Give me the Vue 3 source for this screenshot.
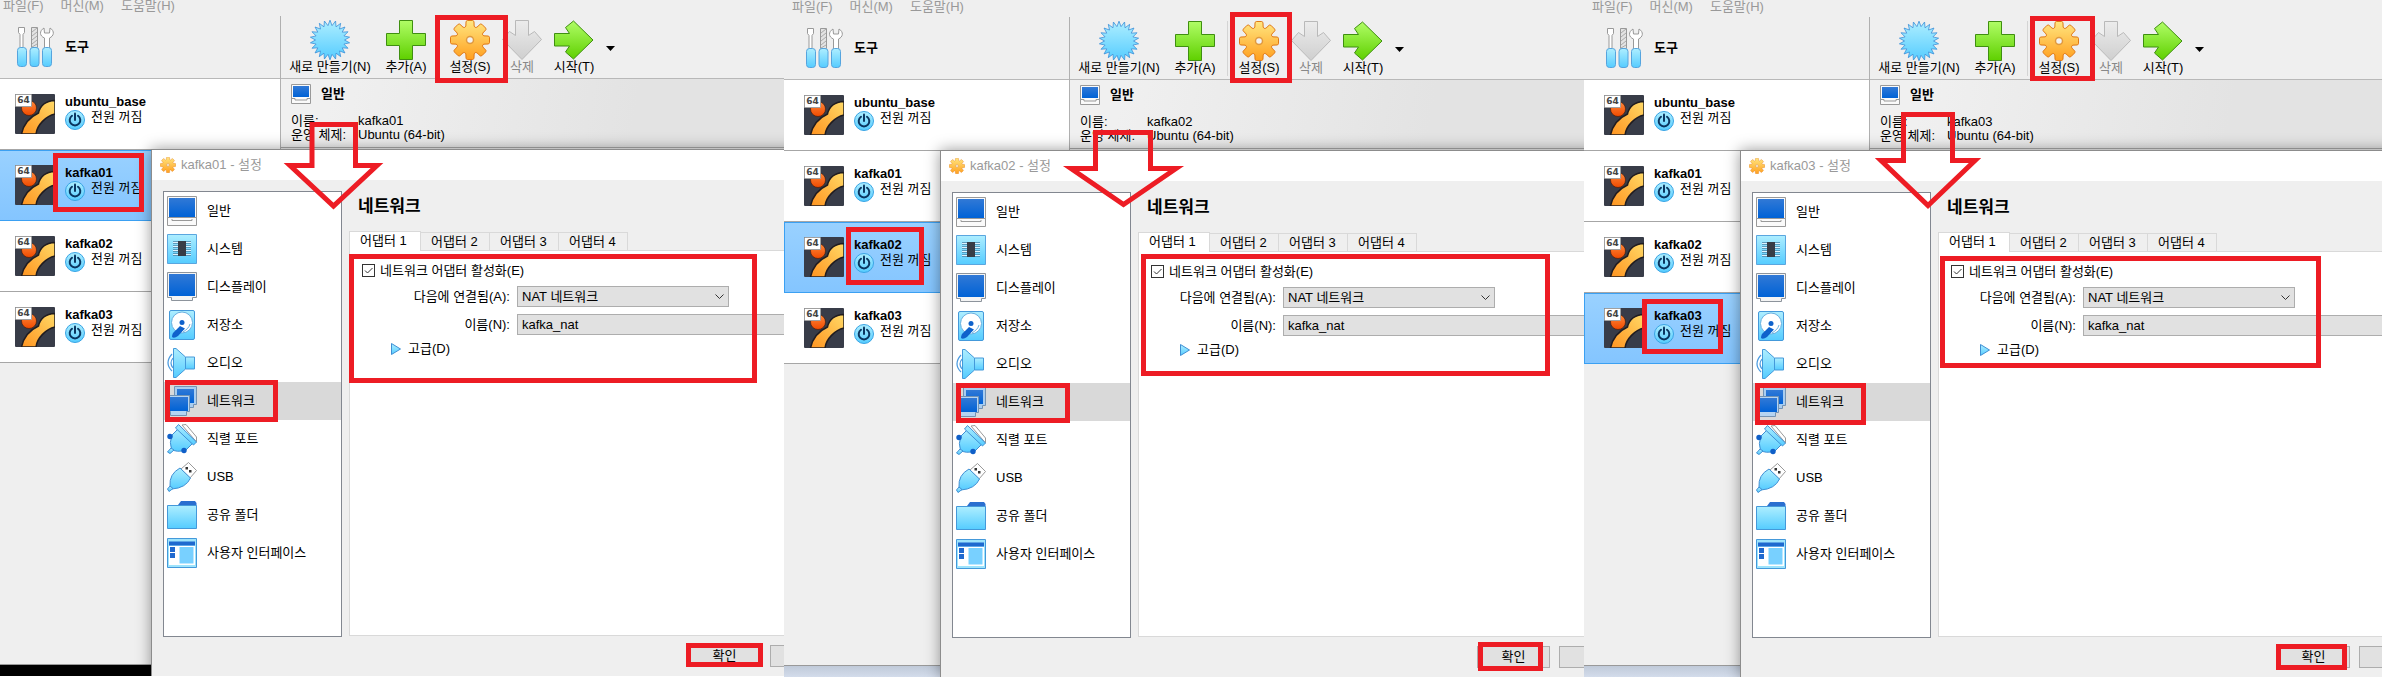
<script setup>
import { reactive } from 'vue'

const machines = ['ubuntu_base', 'kafka01', 'kafka02', 'kafka03']
const menus = ['파일(F)', '머신(M)', '도움말(H)']
const categories = [
  { icon: 'general', label: '일반' },
  { icon: 'system', label: '시스템' },
  { icon: 'display', label: '디스플레이' },
  { icon: 'storage', label: '저장소' },
  { icon: 'audio', label: '오디오' },
  { icon: 'network', label: '네트워크' },
  { icon: 'serial', label: '직렬 포트' },
  { icon: 'usb', label: 'USB' },
  { icon: 'folder', label: '공유 폴더' },
  { icon: 'interface', label: '사용자 인터페이스' },
]

// Marks are drawn over each panel: boxes as [x, y, width, height], arrows as outlines.
const panels = reactive([
  {
    vm: 'kafka01',
    enabled: true,
    cropped: true,
    desk: 'dark',
    boxes: [[53, 153, 91, 59], [435, 15, 73, 68], [349, 254, 408, 129], [165, 380, 113, 42], [686, 643, 77, 24]],
    arrow: 'M312 124.5H355.500V165.500H377L333.500 206L290 165.500H312Z',
  },
  {
    vm: 'kafka02',
    enabled: true,
    cropped: false,
    desk: 'light',
    boxes: [[62, 227, 78, 58], [446, 12, 62, 71], [357, 254, 409, 122], [172, 383, 114, 40], [694, 642, 65, 29]],
    arrow: 'M311.500 132.500H366.500V168.500H392L339.500 204.500L287 168.500H311.500Z',
  },
  {
    vm: 'kafka03',
    enabled: true,
    cropped: false,
    desk: 'light',
    boxes: [[58, 299, 81, 55], [446, 16, 65, 65], [356, 256, 381, 112], [171, 383, 111, 42], [692, 644, 71, 26]],
    arrow: 'M319.500 114.500H368.500V160.500H391L344 205.500L297 160.500H319.500Z',
  },
])

function ring(points, cx, cy) {
  return 'M' + points.map(([a, r]) => `${(cx + r * Math.sin(a)).toFixed(2)} ${(cy - r * Math.cos(a)).toFixed(2)}`).join('L') + 'Z'
}
const burst = ring(
  Array.from({ length: 44 }, (_, i) => [(i * Math.PI) / 22, i % 2 ? 14.5 : 19.8]),
  20, 20,
)
const gear = ring(
  Array.from({ length: 8 }, (_, i) => i * (Math.PI / 4)).flatMap((a) => [
    [a - 0.29, 14.5], [a - 0.21, 19], [a - 0.14, 19.7], [a + 0.14, 19.7], [a + 0.21, 19], [a + 0.29, 14.5], [a + 0.39, 13.6],
  ]),
  20, 20,
)
</script>

<template>
  <svg class="sprite" aria-hidden="true">
    <defs>
      <linearGradient id="g-sky" x1="0" y1="0" x2="0" y2="1"><stop offset="0" stop-color="#aeeeff" /><stop offset="1" stop-color="#55ccff" /></linearGradient>
      <linearGradient id="g-blue" x1="0" y1="0" x2="0" y2="1"><stop offset="0" stop-color="#3179d6" /><stop offset="1" stop-color="#0062d6" /></linearGradient>
      <linearGradient id="g-green" x1="0" y1="0" x2="0" y2="1"><stop offset="0" stop-color="#b0fd66" /><stop offset="1" stop-color="#5fd000" /></linearGradient>
      <linearGradient id="g-gold" x1="0" y1="0" x2="0" y2="1"><stop offset="0" stop-color="#ffe680" /><stop offset="1" stop-color="#ff9f1f" /></linearGradient>
      <linearGradient id="g-gray" x1="0" y1="0" x2="0" y2="1"><stop offset="0" stop-color="#ececec" /><stop offset="1" stop-color="#cfcfcf" /></linearGradient>
      <linearGradient id="g-orb" x1="0" y1="0" x2="0" y2="1"><stop offset="0" stop-color="#ff8a3c" /><stop offset="1" stop-color="#f04a00" /></linearGradient>
      <linearGradient id="g-band" x1="1" y1="0" x2="0" y2="1"><stop offset="0" stop-color="#ffd966" /><stop offset="1" stop-color="#ff9420" /></linearGradient>
    </defs>
    <symbol id="burst" viewBox="0 0 40 40"><path :d="burst" fill="url(#g-sky)" stroke="#3b8fd8" stroke-width=".8" /></symbol>
    <symbol id="plus" viewBox="0 0 40 40"><path d="M13.500 .5h13v13h13v12h-13v14h-13v-14H.5v-12h13z" fill="url(#g-green)" stroke="#3f8f10" /></symbol>
    <symbol id="gear" viewBox="0 0 40 40">
      <path :d="gear" fill="url(#g-gold)" stroke="#e07814" stroke-linejoin="round" />
      <circle cx="20" cy="20" r="3.500" fill="#f3f3f3" stroke="#e09a40" stroke-width="1.500" />
    </symbol>
    <symbol id="down" viewBox="0 0 40 40"><path d="M13.500 .5h13v15l6-4 7 8L20 39.500 .5 19.500l7-8 6 4z" fill="url(#g-gray)" stroke="#b9b9b9" /></symbol>
    <symbol id="right" viewBox="0 0 40 40"><path d="M.5 13.500h15l-4-6 8-6.500L39 20 19.500 39l-8-7 4-6H.5z" fill="url(#g-green)" stroke="#3f8f10" /></symbol>
    <symbol id="tools" viewBox="0 0 40 40">
      <path d="M3.500 .5h6v5l-1.500 2v13h-3v-13l-1.500-2z" fill="#fff" stroke="#999" />
      <path d="M16.500 .5h6v20h-6z" fill="#e3e3e3" stroke="#999" />
      <path d="M17 5l5-4M17 9l5-4M17 13l5-4M17 17l5-4M17 20l5-3" stroke="#aaa" />
      <path d="M29 1l.5 5h5l.5-5c5 3 4 8-.5 10v10h-5V11c-5-2-5.500-7-.5-10z" fill="#fff" stroke="#999" />
      <rect x="2.500" y="20.500" width="9" height="19" rx="3" fill="url(#g-sky)" stroke="#55a4de" />
      <rect x="15" y="20.500" width="9" height="19" rx="3" fill="url(#g-sky)" stroke="#55a4de" />
      <rect x="27.500" y="20.500" width="9" height="19" rx="3" fill="url(#g-sky)" stroke="#55a4de" />
    </symbol>
    <symbol id="ubuntu" viewBox="0 0 40 40">
      <rect width="40" height="40" rx="1" fill="#383c48" />
      <path d="M40 6.500C30 7 25 12 23.500 19 17 22 9 28 6.500 40H21c1-9 10-18 19-20z" fill="url(#g-band)" stroke="#201c20" stroke-width="1.500" />
      <circle cx="14" cy="14" r="7.500" fill="url(#g-orb)" stroke="#401808" stroke-width=".6" />
    </symbol>
    <symbol id="power" viewBox="0 0 20 20">
      <circle cx="10" cy="10" r="9.500" fill="url(#g-sky)" stroke="#3aa4e4" />
      <path d="M7 5.800a5.300 5.300 0 1 0 6 0" fill="none" stroke="#0a3560" stroke-width="2" stroke-linecap="round" />
      <path d="M10 3.500v6.500" stroke="#0a3560" stroke-width="2" stroke-linecap="round" />
    </symbol>
    <symbol id="general" viewBox="0 0 30 30">
      <path d="M.5 .5h29v21h-29zM.5 21.500h29v8h-29z" fill="#fafafa" stroke="#999" />
      <path d="M5 23v1.500h20V23" fill="none" stroke="#999" />
      <path d="M2 2h26v19H2z" fill="url(#g-blue)" />
    </symbol>
    <symbol id="general-small" viewBox="0 0 20 20">
      <path d="M.5 .5h19v19H.5z" fill="#fafafa" stroke="#999" />
      <path d="M1 14.500h3v1.500h12v-1.500h3" fill="none" stroke="#999" />
      <path d="M2 2h16v11H2z" fill="url(#g-blue)" />
    </symbol>
    <symbol id="system" viewBox="0 0 30 30">
      <path d="M.5 .5h29v29h-29z" fill="url(#g-sky)" stroke="#5aa6df" />
      <path d="M6 8.500h18M6 12.500h18M6 16.500h18M6 20.500h18" stroke="#4a83a8" stroke-width="2.400" />
      <path d="M6 8.500h18M6 12.500h18M6 16.500h18M6 20.500h18" stroke="#e0f4ff" />
      <path d="M11 7h8v15h-8z" fill="#383c46" />
    </symbol>
    <symbol id="display" viewBox="0 0 30 30">
      <path d="M.5 .5h29v25h-4v3h-21v-3h-4z" fill="#f4f4f4" stroke="#8d949c" />
      <path d="M2 2h26v22H2z" fill="url(#g-blue)" />
    </symbol>
    <symbol id="storage" viewBox="0 0 30 30">
      <rect x="2.500" y=".5" width="25" height="29" rx="1.500" fill="url(#g-sky)" stroke="#4499da" />
      <circle cx="15" cy="12.500" r="10.500" fill="#fff" stroke="#6ab0e0" />
      <path d="M13 16l5 2.500-7 7.500q-4 3-6 1 0-4 3-6z" fill="#0f62cc" />
      <circle cx="15" cy="12.500" r="2.500" fill="#0f62cc" />
      <path d="M23 14c-1 4-4 6-7 8" fill="none" stroke="#6ab0e0" />
    </symbol>
    <symbol id="audio" viewBox="0 0 30 30">
      <path d="M5 6Q-3 15 5 23M6 10q-4 5 0 10" fill="none" stroke="#4a9be0" stroke-width="1.200" />
      <path d="M18.500 9h9v12h-9z" fill="url(#g-sky)" stroke="#4499da" />
      <path d="M6.500 .5H9l9.500 8.500v12L9 29.500H6.500z" fill="url(#g-sky)" stroke="#4499da" />
    </symbol>
    <symbol id="network" viewBox="0 0 30 30">
      <path d="M7.500 .5h22v18h-3v3h-19z" fill="#a9cdf0" stroke="#7493b3" />
      <path d="M10 3h17v14H10z" fill="url(#g-blue)" />
      <path d="M.5 9.500h22v16h-3v4h-16v-4h-3z" fill="#b4d4f2" stroke="#7493b3" />
      <path d="M2 11h19v14H2z" fill="url(#g-blue)" />
    </symbol>
    <symbol id="serial" viewBox="0 0 30 30">
      <path d="M15 1l4-.5L29.500 13v5z" fill="#fff" stroke="#999" />
      <path d="M5 11l7-7 14 15-7 7Q9 29 4.500 25 2 19 5 11z" fill="url(#g-sky)" stroke="#3f8fd4" />
      <path d="M8.500 4l3-3.500L29.500 18l-3 3z" fill="url(#g-sky)" stroke="#3f8fd4" />
      <path d="M4 24l3 2-4 3.500-2.500-1.500z" fill="url(#g-sky)" stroke="#3f8fd4" />
      <circle cx="3" cy="12.500" r="2.700" fill="#0f5fc8" /><circle cx="17" cy="26.500" r="2.700" fill="#0f5fc8" />
    </symbol>
    <symbol id="usb" viewBox="0 0 30 30">
      <path d="M14 7L21.500 .5 29.500 8.500 23 16z" fill="#fff" stroke="#999" />
      <path d="M3 24Q2 12 13 6l10.500 10Q19 26 5 27z" fill="url(#g-sky)" stroke="#3f8fd4" />
      <path d="M3 24l3 2.500-4 3L.5 27z" fill="url(#g-sky)" stroke="#3f8fd4" />
      <path d="M18.500 5h2.500v2.500h-2.500zM22 8h2.500v2.500H22z" fill="#333" />
    </symbol>
    <symbol id="folder" viewBox="0 0 30 30">
      <path d="M11 5l3-4h14l1.500 2v3H11z" fill="#2a6fd0" />
      <path d="M.5 5.500h29v23h-29z" fill="url(#g-sky)" stroke="#4499da" />
    </symbol>
    <symbol id="interface" viewBox="0 0 30 30">
      <path d="M.5 .5h29v29h-29z" fill="#9ee4fc" stroke="#4499da" />
      <path d="M2 8h26v19H2z" fill="#fff" />
      <path d="M2 3.500h26v4H2zM3 9h5v5H3zM3 15h5v5H3z" fill="#1f69cf" />
      <path d="M12.500 9h14v16.500h-14z" fill="#78d0ff" />
    </symbol>
    <symbol id="play" viewBox="0 0 10 12"><path d="M.5 .5L9.500 6 .5 11.500z" fill="url(#g-sky)" stroke="#3f8fd4" /></symbol>
  </svg>

  <div class="board">
    <section v-for="(panel, n) in panels" :key="panel.vm" class="panel">
      <div class="scene" :class="{ cropped: panel.cropped }">
        <div class="main">
          <nav class="menu">
            <button v-for="m in menus" :key="m" type="button">{{ m }}</button>
          </nav>
          <div class="columns">
            <aside class="sidebar">
              <button type="button" class="tools">
                <svg class="i40"><use href="#tools" /></svg><b>도구</b>
              </button>
              <button v-for="m in machines" :key="m" type="button" class="vm" :class="{ selected: m === panel.vm }">
                <span class="os"><svg class="i40"><use href="#ubuntu" /></svg><span class="badge">64</span></span>
                <span class="vm-text">
                  <b>{{ m }}</b>
                  <span class="state"><svg class="i20"><use href="#power" /></svg><span>전원 꺼짐</span></span>
                </span>
              </button>
            </aside>
            <div class="content">
              <div class="toolbar">
                <button type="button" class="tool wide"><svg class="i40"><use href="#burst" /></svg><span>새로 만들기(N)</span></button>
                <button type="button" class="tool"><svg class="i40"><use href="#plus" /></svg><span>추가(A)</span></button>
                <i class="rule"></i>
                <button type="button" class="tool"><svg class="i40"><use href="#gear" /></svg><span>설정(S)</span></button>
                <button type="button" class="tool" disabled><svg class="i40"><use href="#down" /></svg><span>삭제</span></button>
                <button type="button" class="tool"><svg class="i40"><use href="#right" /></svg><span>시작(T)</span></button>
                <svg class="caret" viewBox="0 0 9 5"><path d="M0 0h9L4.500 5z" /></svg>
              </div>
              <div class="details">
                <h2><svg class="i20"><use href="#general-small" /></svg>일반</h2>
                <dl>
                  <dt>이름:</dt><dd>{{ panel.vm }}</dd>
                  <dt>운영 체제:</dt><dd>Ubuntu (64-bit)</dd>
                </dl>
              </div>
            </div>
          </div>
          <div class="desk" :class="panel.desk"></div>
        </div>

        <div class="dialog" role="dialog" :aria-label="panel.vm + ' - 설정'">
          <header><svg class="i16"><use href="#gear" /></svg>{{ panel.vm }} - 설정</header>
          <div class="body">
            <div class="categories">
              <button v-for="c in categories" :key="c.icon" type="button" :class="{ current: c.icon === 'network' }">
                <svg class="i30"><use :href="'#' + c.icon" /></svg>{{ c.label }}
              </button>
            </div>
            <div class="page">
              <h1>네트워크</h1>
              <div class="tabs" role="tablist">
                <button v-for="t in 4" :key="t" type="button" role="tab" :aria-selected="t === 1">어댑터 {{ t }}</button>
              </div>
              <div class="pane">
                <label class="enable">
                  <span class="check">
                    <input v-model="panel.enabled" type="checkbox" />
                    <svg v-if="panel.enabled" viewBox="0 0 13 13"><path d="M3 6.500l2.500 2.500L10.500 4" /></svg>
                  </span>네트워크 어댑터 활성화(E)
                </label>
                <div class="field">
                  <label :for="'attached' + n">다음에 연결됨(A):</label>
                  <span class="combo short">
                    <select :id="'attached' + n"><option>NAT 네트워크</option></select>
                    <svg viewBox="0 0 9 5"><path d="M.5 .5l4 4 4-4" /></svg>
                  </span>
                </div>
                <div class="field">
                  <label :for="'name' + n">이름(N):</label>
                  <span class="combo">
                    <select :id="'name' + n"><option>kafka_nat</option></select>
                    <svg viewBox="0 0 9 5"><path d="M.5 .5l4 4 4-4" /></svg>
                  </span>
                </div>
                <button type="button" class="advanced"><svg><use href="#play" /></svg>고급(D)</button>
              </div>
            </div>
          </div>
          <footer>
            <button type="button">확인</button>
            <button type="button" aria-label="취소"></button>
          </footer>
        </div>
      </div>

      <svg class="marks" aria-hidden="true">
        <rect v-for="(b, k) in panel.boxes" :key="k" :x="b[0] + 2.5" :y="b[1] + 2.5" :width="b[2] - 5" :height="b[3] - 5" />
        <path :d="panel.arrow" />
      </svg>
    </section>
  </div>
</template>

<style>
body {
  margin: 0;
  background: #fff;
}
</style>

<style scoped>
.board {
  display: grid;
  grid-template-columns: 784fr 800fr 798fr;
  align-items: start;
  font: 13px/14px "Liberation Sans", "Noto Sans CJK KR", sans-serif;
  color: #000;
}
.sprite {
  position: absolute;
  width: 0;
  height: 0;
}
button {
  font: inherit;
  color: inherit;
  background: none;
  border: 0;
  padding: 0;
  margin: 0;
  text-align: left;
  white-space: nowrap;
}
svg {
  display: block;
  flex: none;
}
.i16 { width: 16px; height: 16px; }
.i20 { width: 20px; height: 20px; }
.i30 { width: 30px; height: 30px; }
.i40 { width: 40px; height: 40px; }

.panel {
  position: relative;
  overflow: hidden;
}
.scene {
  display: grid;
  grid-template-columns: minmax(0, 1fr);
}
.scene.cropped {
  margin: -1px 0 0 -5px;
}
.main,
.dialog {
  grid-area: 1 / 1;
}
.main {
  display: flex;
  flex-direction: column;
  background: #efefef;
}
.menu {
  display: flex;
  align-items: flex-start;
  gap: 17px;
  height: 17px;
  padding-left: 8px;
  color: #999;
}
.columns {
  flex: 1;
  display: flex;
}
.sidebar {
  flex: none;
  width: 285px;
  display: flex;
  flex-direction: column;
}
.tools,
.vm {
  display: flex;
  gap: 10px;
  padding-left: 20px;
}
.tools {
  align-items: center;
  height: 63px;
  border-bottom: 1px solid #b8b8b8;
}
.vm {
  height: 71px;
  box-sizing: border-box;
  padding-top: 15px;
  background: #fff;
  border-bottom: 1px solid #a6a6a6;
}
.vm.selected {
  padding-top: 14px;
  padding-left: 19px;
  background: linear-gradient(#99d1ff, #84c5ff);
  border-top: 1px solid #3ba0f2;
  border-left: 1px solid #3ba0f2;
  border-bottom-color: #3ba0f2;
}
.os {
  position: relative;
}
.badge {
  position: absolute;
  top: 0;
  left: 0;
  width: 17px;
  height: 13px;
  box-sizing: border-box;
  border: 1px solid #a0a0a0;
  border-radius: 1px;
  background: #fff;
  color: #444;
  font: bold 9px/11px "DejaVu Sans", sans-serif;
  text-align: center;
}
.vm-text b {
  display: block;
  line-height: 16px;
}
.state {
  display: flex;
  gap: 6px;
}
.content {
  flex: 1;
  min-width: 0;
  border-left: 1px solid #b0b0b0;
}
.toolbar {
  display: flex;
  gap: 12px;
  height: 58px;
  padding: 4px 0 0 5px;
  border-bottom: 1px solid #b8b8b8;
}
.tool {
  display: flex;
  flex-direction: column;
  align-items: center;
  width: 40px;
  height: 56px;
}
.tool.wide {
  width: 88px;
}
.tool:disabled {
  color: #888;
}
.rule {
  width: 1px;
  margin: 0 -1px 3px 0;
  background: #d4d4d4;
}
.caret {
  width: 9px;
  height: 5px;
  margin-top: 26px;
}
.details {
  height: 63px;
  padding: 5px 10px 0;
  background: linear-gradient(100deg, #f0f0f0 10%, #e3e3e3 70%);
  border-bottom: 1px solid #aaa;
}
.details h2 {
  display: flex;
  align-items: center;
  gap: 10px;
  height: 20px;
  margin: 0 0 10px;
  font-size: 13px;
}
.details dl {
  display: grid;
  grid-template-columns: 67px 1fr;
  margin: 0;
}
.details dd {
  margin: 0;
}
.desk {
  height: 12px;
  box-sizing: border-box;
  border-top: 1px solid #999;
}
.desk.dark {
  background: #000;
}
.desk.light {
  background: linear-gradient(#c0cad9, #d3dceb);
}

.dialog {
  width: 700px;
  box-sizing: border-box;
  margin: 150px 0 0 156px;
  background: #efefef;
  border: solid #8c8c8c;
  border-width: 1px 0 0 1px;
  box-shadow: 0 0 14px rgba(0, 0, 0, 0.4);
}
.dialog header {
  display: flex;
  align-items: center;
  gap: 5px;
  height: 30px;
  padding-left: 8px;
  background: #fff;
  color: #999;
}
.body {
  display: flex;
  gap: 7px;
  padding: 11px 8px 0 11px;
}
.categories {
  flex: none;
  box-sizing: border-box;
  width: 179px;
  min-height: 446px;
  background: #fff;
  border: 1px solid #828790;
}
.categories button {
  display: flex;
  align-items: center;
  gap: 10px;
  width: 100%;
  height: 38px;
  padding-left: 3px;
}
.categories .current {
  background: #d9d9d9;
}
.page {
  flex: 1;
  min-width: 0;
  display: flex;
  flex-direction: column;
  padding-bottom: 1px;
}
.page h1 {
  margin: 0 0 8px;
  padding-left: 9px;
  font-size: 17px;
  line-height: 32px;
}
.tabs {
  display: flex;
  align-items: flex-end;
}
.tabs button {
  box-sizing: border-box;
  width: 69px;
  height: 18px;
  padding-left: 10px;
  border: 1px solid #d9d9d9;
  border-width: 1px 1px 0 0;
}
.tabs button[aria-selected="true"] {
  width: 72px;
  height: 20px;
  margin-bottom: -1px;
  padding-left: 10px;
  padding-bottom: 2px;
  background: #fff;
  border-left-width: 1px;
  z-index: 1;
}
.pane {
  flex: 1;
  padding: 10px 12px 0;
  background: #fff;
  border: 1px solid #d9d9d9;
}
.enable {
  display: flex;
  align-items: center;
  gap: 5px;
  height: 19px;
  margin-bottom: 6px;
}
.check {
  display: grid;
}
.check > * {
  grid-area: 1 / 1;
  width: 13px;
  height: 13px;
}
.check input {
  appearance: none;
  box-sizing: border-box;
  margin: 0;
  background: #fff;
  border: 1px solid #333;
}
.check svg,
.combo svg {
  pointer-events: none;
  fill: none;
  stroke: #333;
}
.field {
  display: flex;
  align-items: center;
  gap: 7px;
  margin-bottom: 7px;
}
.field label {
  width: 125px;
  text-align: right;
}
.cropped .field label {
  width: 148px;
}
.combo {
  flex: 1;
  display: grid;
  align-items: center;
}
.combo.short {
  flex: none;
  width: 212px;
}
.combo > * {
  grid-area: 1 / 1;
}
.combo select {
  appearance: none;
  box-sizing: border-box;
  width: 100%;
  height: 21px;
  padding: 0 20px 0 4px;
  font: inherit;
  color: inherit;
  background: #e1e1e1;
  border: 1px solid #adadad;
  border-radius: 0;
}
.combo svg {
  justify-self: end;
  width: 9px;
  height: 5px;
  margin-right: 5px;
}
.advanced {
  display: flex;
  align-items: center;
  gap: 7px;
  height: 14px;
  padding-left: 29px;
}
.advanced svg {
  width: 10px;
  height: 12px;
}
.dialog footer {
  display: flex;
  justify-content: flex-end;
  gap: 9px;
  padding: 8px 8px 9px;
}
.dialog footer button {
  box-sizing: border-box;
  width: 73px;
  height: 22px;
  text-align: center;
  background: #e1e1e1;
  border: 1px solid #adadad;
}
.marks {
  position: absolute;
  inset: 0;
  width: 100%;
  height: 100%;
  pointer-events: none;
  fill: none;
  stroke: #ed1c24;
  stroke-width: 5px;
}
</style>
